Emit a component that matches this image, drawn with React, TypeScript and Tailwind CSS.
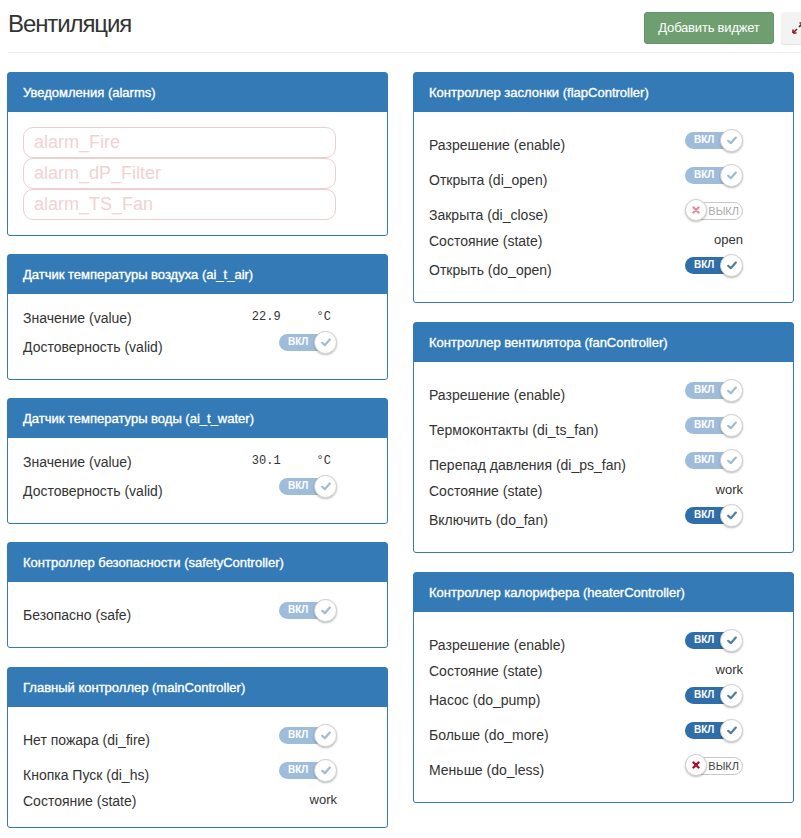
import React from "react";

const FONT = { fontFamily: '"Liberation Sans", Arial, sans-serif' };

type Tog = { on: boolean; active?: boolean };

function Toggle({ on, active }: Tog) {
  if (on) {
    return (
      <div className="relative w-[58px] h-[20px] shrink-0">
        <div
          className={
            "absolute left-0 top-[2px] h-[17px] w-[52px] rounded-full " +
            (active ? "bg-[#2f6ea8]" : "bg-[#9fbddb]")
          }
        >
          <span className="absolute left-[9px] top-0 leading-[16px] text-[10px] font-bold text-white">
            ВКЛ
          </span>
        </div>
        <div className="absolute right-0 top-[-1px] w-[23px] h-[23px] rounded-full bg-white border border-[#d0d0d0] shadow-[0_1px_2px_rgba(0,0,0,0.25)] flex items-center justify-center">
          <svg width="10" height="9" viewBox="0 0 10 9">
            <path
              d="M1.2 4.8 L3.8 7.2 L8.8 1.6"
              fill="none"
              stroke={active ? "#4f7f9c" : "#9fbcd0"}
              strokeWidth="2.2"
              strokeLinecap="round"
              strokeLinejoin="round"
            />
          </svg>
        </div>
      </div>
    );
  }
  return (
    <div className="relative w-[58px] h-[20px] shrink-0">
      <div className="absolute left-[2px] top-[2px] h-[18px] w-[56px] rounded-full bg-white border border-[#c8c8c8]">
        <span
          className={
            "absolute right-[3px] top-0 leading-[16px] text-[11px] " +
            (active ? "text-[#444]" : "text-[#aaa]")
          }
        >
          ВЫКЛ
        </span>
      </div>
      <div className="absolute left-0 top-[-1px] w-[22px] h-[22px] rounded-full bg-white border border-[#d0d0d0] shadow-[0_1px_2px_rgba(0,0,0,0.25)] flex items-center justify-center">
        <svg width="8" height="8" viewBox="0 0 8 8">
          <path
            d="M1.5 1.5 L6.5 6.5 M6.5 1.5 L1.5 6.5"
            fill="none"
            stroke={active ? "#a8102f" : "#e08ca0"}
            strokeWidth="2.4"
            strokeLinecap="round"
          />
        </svg>
      </div>
    </div>
  );
}

type Row =
  | { kind: "toggle"; label: string; on: boolean; active?: boolean }
  | { kind: "text"; label: string; value: string }
  | { kind: "value"; label: string; value: string; unit: string };

function RowView({ row }: { row: Row }) {
  if (row.kind === "toggle") {
    return (
      <div className="flex items-start justify-between h-[35px]">
        <span className="mt-[11px] leading-[20px] text-[14px] text-[#333]">{row.label}</span>
        <div className="mt-[6px]">
          <Toggle on={row.on} active={row.active} />
        </div>
      </div>
    );
  }
  if (row.kind === "text") {
    return (
      <div className="flex items-start justify-between h-[20px]">
        <span className="mt-[2px] leading-[20px] text-[14px] text-[#333]">{row.label}</span>
        <span className="mt-[1px] leading-[20px] text-[13px] text-[#333]">{row.value}</span>
      </div>
    );
  }
  return (
    <div className="flex items-start justify-between h-[20px]">
      <span className="mt-[2px] leading-[20px] text-[14px] text-[#333]">{row.label}</span>
      <div
        className="mt-[1px] flex leading-[20px] text-[12px] text-[#333] pr-[6px]"
        style={{ fontFamily: '"Liberation Mono", "DejaVu Sans Mono", monospace' }}
      >
        <span>{row.value}</span>
        <span className="ml-[36px]">{row.unit}</span>
      </div>
    </div>
  );
}

function Panel({ title, children, className = "" }: { title: string; children: React.ReactNode; className?: string }) {
  return (
    <div className={"border border-[#337ab7] rounded-[3px] bg-white " + className}>
      <div className="h-[39px] bg-[#337ab7] flex items-center px-[15px]">
        <span className="text-[13px] text-white [-webkit-text-stroke:0.35px_#fff]">{title}</span>
      </div>
      {children}
    </div>
  );
}

function RowsPanel({ title, rows, className }: { title: string; rows: Row[]; className?: string }) {
  return (
    <Panel title={title} className={className}>
      <div className="pt-[12px] pb-[18px] pl-[15px] pr-[50px]">
        {rows.map((r, i) => (
          <RowView key={i} row={r} />
        ))}
      </div>
    </Panel>
  );
}

export default function App() {
  const alarms = ["alarm_Fire", "alarm_dP_Filter", "alarm_TS_Fan"];
  return (
    <div className="w-full overflow-hidden bg-white min-h-[838px]" style={FONT}>
      <div className="w-[815px] pl-[8px]">
        <div className="flex items-start h-[52px]">
          <h1 className="mt-[9px] text-[24px] leading-[30px] text-[#333] tracking-[-1.1px]">Вентиляция</h1>
          <div className="ml-auto mt-[12px] flex">
            <button className="h-[32px] w-[130px] rounded-[3px] bg-[#6f9f70] border border-[#62916a] text-white text-[13px] tracking-[-0.2px]">
              Добавить виджет
            </button>
            <button className="ml-[7px] h-[32px] w-[34px] rounded-[3px] bg-[#f3f3f3] shadow-[0_1px_1px_rgba(0,0,0,0.12)] flex items-start pl-[11px] pt-[10px]">
              <svg width="12" height="12" viewBox="0 0 12 12">
                <path d="M1 11 L5 7" stroke="#8a1c1c" strokeWidth="1.6" />
                <path d="M1 11 L1 7.5 M1 11 L4.5 11" stroke="#8a1c1c" strokeWidth="1.6" />
                <path d="M11 1 L7 5" stroke="#333" strokeWidth="1.6" />
                <path d="M11 1 L7.5 1 M11 1 L11 4.5" stroke="#333" strokeWidth="1.6" />
              </svg>
            </button>
          </div>
        </div>
        <div className="h-px bg-[#eeeeee]" />
      </div>

      <div className="flex items-start pl-[7px] pt-[19px] gap-[25px]">
        <div className="w-[381px] flex flex-col gap-[18px]">
          <Panel title="Уведомления (alarms)">
            <div className="pt-[15px] pb-[15px] pl-[15px]">
              {alarms.map((a) => (
                <div
                  key={a}
                  className="w-[313px] h-[31px] border border-[#ecd0d0] rounded-[10px] px-[10px] flex items-center text-[18px] text-[#f1d2d2]"
                >
                  {a}
                </div>
              ))}
            </div>
          </Panel>
          <RowsPanel
            title="Датчик температуры воздуха (ai_t_air)"
            rows={[
              { kind: "value", label: "Значение (value)", value: "22.9", unit: "°C" },
              { kind: "toggle", label: "Достоверность (valid)", on: true },
            ]}
          />
          <RowsPanel
            title="Датчик температуры воды (ai_t_water)"
            rows={[
              { kind: "value", label: "Значение (value)", value: "30.1", unit: "°C" },
              { kind: "toggle", label: "Достоверность (valid)", on: true },
            ]}
          />
          <RowsPanel
            title="Контроллер безопасности (safetyController)"
            rows={[{ kind: "toggle", label: "Безопасно (safe)", on: true }]}
          />
          <RowsPanel
            title="Главный контроллер (mainController)"
            className="mt-[1px]"
            rows={[
              { kind: "toggle", label: "Нет пожара (di_fire)", on: true },
              { kind: "toggle", label: "Кнопка Пуск (di_hs)", on: true },
              { kind: "text", label: "Состояние (state)", value: "work" },
            ]}
          />
        </div>

        <div className="w-[381px] flex flex-col gap-[19px]">
          <RowsPanel
            title="Контроллер заслонки (flapController)"
            rows={[
              { kind: "toggle", label: "Разрешение (enable)", on: true },
              { kind: "toggle", label: "Открыта (di_open)", on: true },
              { kind: "toggle", label: "Закрыта (di_close)", on: false },
              { kind: "text", label: "Состояние (state)", value: "open" },
              { kind: "toggle", label: "Открыть (do_open)", on: true, active: true },
            ]}
          />
          <RowsPanel
            title="Контроллер вентилятора (fanController)"
            rows={[
              { kind: "toggle", label: "Разрешение (enable)", on: true },
              { kind: "toggle", label: "Термоконтакты (di_ts_fan)", on: true },
              { kind: "toggle", label: "Перепад давления (di_ps_fan)", on: true },
              { kind: "text", label: "Состояние (state)", value: "work" },
              { kind: "toggle", label: "Включить (do_fan)", on: true, active: true },
            ]}
          />
          <RowsPanel
            title="Контроллер калорифера (heaterController)"
            rows={[
              { kind: "toggle", label: "Разрешение (enable)", on: true, active: true },
              { kind: "text", label: "Состояние (state)", value: "work" },
              { kind: "toggle", label: "Насос (do_pump)", on: true, active: true },
              { kind: "toggle", label: "Больше (do_more)", on: true, active: true },
              { kind: "toggle", label: "Меньше (do_less)", on: false, active: true },
            ]}
          />
        </div>
      </div>
    </div>
  );
}
